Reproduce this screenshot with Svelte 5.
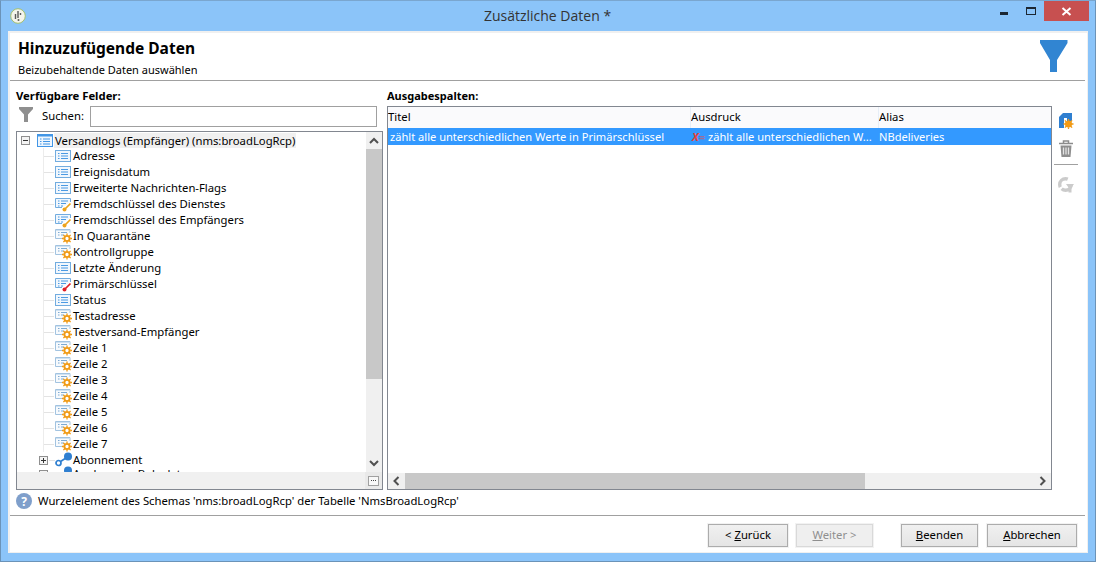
<script>
  const fields = [
    ['Adresse', 'list'], ['Ereignisdatum', 'list'], ['Erweiterte Nachrichten-Flags', 'list'],
    ['Fremdschlüssel des Dienstes', 'key'], ['Fremdschlüssel des Empfängers', 'key'],
    ['In Quarantäne', 'gear'], ['Kontrollgruppe', 'gear'], ['Letzte Änderung', 'list'],
    ['Primärschlüssel', 'pkey'], ['Status', 'list'], ['Testadresse', 'gear'],
    ['Testversand-Empfänger', 'gear'], ['Zeile 1', 'gear'], ['Zeile 2', 'gear'], ['Zeile 3', 'gear'],
    ['Zeile 4', 'gear'], ['Zeile 5', 'gear'], ['Zeile 6', 'gear'], ['Zeile 7', 'gear']
  ];
</script>

{#snippet gearShape(cx, cy)}
  <circle cx={cx} cy={cy} r="2.600" fill="#fff" stroke="#f09a14" stroke-width="1.900" />
  <path d="M{cx} {cy - 5}v1.800M{cx} {cy + 3.200}v1.800M{cx - 5} {cy}h1.800M{cx + 3.200} {cy}h1.800M{cx - 3.600} {cy - 3.600}l1.300 1.300M{cx + 2.300} {cy + 2.300}l1.300 1.300M{cx - 3.600} {cy + 3.600}l1.300-1.300M{cx + 2.300} {cy - 2.300}l1.300-1.300" stroke="#f09a14" stroke-width="1.300" fill="none" />
{/snippet}

{#snippet fieldIcon(kind)}
  <svg class="ficon" width="18" height="16" viewBox="0 0 18 16">
    {#if kind === 'list'}
      <rect x=".5" y="2.500" width="15" height="11" fill="#f1f7fd" stroke="#72acdf" />
      <path d="M3 5.500h1.500M6 5.500h7M3 8h1.500M6 8h7M3 10.500h1.500M6 10.500h7" stroke="#4b9ae3" stroke-width="1.200" fill="none" />
    {:else if kind === 'gear'}
      <path d="M8 10.500H.5V1.500h14.500V5" fill="#f7fafd" stroke="#a2c3e0" />
      <rect x="1" y="2" width="13.500" height="1" fill="#cfe2f3" />
      <path d="M3 4.500h1.500M6 4.500h6M3 7h1.500M6 7h3" stroke="#7eabd3" fill="none" />
      {@render gearShape(12, 10.500)}
    {:else}
      {@const tint = kind === 'key' ? '#eda31c' : '#df1f26'}
      <path d="M7 11.500H.5V2.500h15V6" fill="#f1f7fd" stroke="#72acdf" />
      <path d="M3 5h1.500M6 5h7M3 7.500h1.500M6 7.500h5M3 10h1.500M6 10h2" stroke="#4b9ae3" fill="none" />
      <path d="M15.500 7.500L10 13" stroke={tint} stroke-width="1.700" fill="none" />
      <circle cx="9.500" cy="13.500" r="2" fill={tint} />
    {/if}
  </svg>
{/snippet}

{#snippet linkIcon()}
  <svg class="ficon" width="18" height="16" viewBox="0 0 18 16">
    <circle cx="3.500" cy="11" r="2.500" fill="#fff" stroke="#2f7fd0" stroke-width="1.700" />
    <path d="M5.500 9.500L11 6" stroke="#2f7fd0" stroke-width="1.700" />
    <circle cx="13" cy="4.500" r="4" fill="#2f7fd0" />
  </svg>
{/snippet}

<div class="window">
  <header class="titlebar">
    <svg class="appicon" width="16" height="16" viewBox="0 0 16 16">
      <circle cx="8" cy="8" r="7.300" fill="#f4f4ec" stroke="#a4c06e" />
      <path d="M8 3v7M5.500 6v5M10.500 5v2" stroke="#5b5b5b" stroke-width="1.400" fill="none" />
      <circle cx="8.500" cy="12" r="1" fill="#5b5b5b" />
    </svg>
    <span class="wintitle">Zusätzliche Daten *</span>
    <div class="winbtns">
      <span class="wbtn"><i class="minimize"></i></span>
      <span class="wbtn"><i class="maximize"></i></span>
      <span class="wbtn close">
        <svg width="11" height="9" viewBox="0 0 11 9"><path d="M1.500 1l8 7M9.500 1l-8 7" stroke="#fff" stroke-width="2" /></svg>
      </span>
    </div>
  </header>

  <div class="client">
    <section class="heading">
      <div>
        <h1>Hinzuzufügende Daten</h1>
        <p>Beizubehaltende Daten auswählen</p>
      </div>
      <svg class="funnel" width="28" height="32" viewBox="0 0 28 32">
        <path d="M0 0H27.500V3L17 20V32H10V20L0 3Z" fill="#3185d2" />
      </svg>
    </section>

    <div class="panels">
      <section class="left">
        <h2>Verfügbare Felder:</h2>
        <div class="search">
          <svg width="14" height="15" viewBox="0 0 14 15"><path d="M0 0H14V2L9 7.500V15H5V7.500L0 2Z" fill="#8f8f8f" /></svg>
          <label for="search">Suchen:</label>
          <input id="search" type="text" />
        </div>
        <div class="treebox">
          <div class="treemain">
            <div class="treerows">
              <div class="row root">
                <span class="expander"></span>
                <svg class="rooticon" width="16" height="14" viewBox="0 0 16 14">
                  <rect x=".5" y=".5" width="15" height="12" fill="#eef6fe" stroke="#4296e6" />
                  <rect x="1" y="1" width="14" height="1.500" fill="#4296e6" />
                  <path d="M3 5h1.500M6 5h7M3 7.500h1.500M6 7.500h7M3 10h1.500M6 10h7" stroke="#4296e6" stroke-width="1.200" />
                </svg>
                <span class="roottext">Versandlogs (Empfänger) (nms:broadLogRcp)</span>
              </div>
              {#each fields as [name, kind]}
                <div class="row child">
                  <i class="branch"></i>
                  {@render fieldIcon(kind)}
                  <span>{name}</span>
                </div>
              {/each}
              <div class="row link">
                <span class="expander plus"></span>
                <i class="branch short"></i>
                {@render linkIcon()}
                <span>Abonnement</span>
              </div>
              <div class="row link last">
                <span class="expander plus"></span>
                <i class="branch short"></i>
                {@render linkIcon()}
                <span>Analyse der Bohrdaten</span>
              </div>
            </div>
            <div class="vscroll">
              <svg width="16" height="17" viewBox="0 0 16 17"><path d="M4 11l4-4 4 4" stroke="#505050" stroke-width="2" fill="none" /></svg>
              <div class="vthumb"></div>
              <div class="vrest"></div>
              <svg width="16" height="17" viewBox="0 0 16 17"><path d="M4 6l4 4 4-4" stroke="#505050" stroke-width="2" fill="none" /></svg>
            </div>
          </div>
          <div class="treefoot">
            <div class="corner"><span class="more"><i></i><i></i><i></i></span></div>
          </div>
        </div>
      </section>

      <section class="right">
        <h2 class="narrow">Ausgabespalten:</h2>
        <div class="rightbody">
          <div class="tablebox">
            <div class="thead">
              <span class="c1">Titel</span>
              <span class="c2">Ausdruck</span>
              <span class="c3">Alias</span>
            </div>
            <div class="trow">
              <span class="c1">zählt alle unterschiedlichen Werte in Primärschlüssel</span>
              <span class="c2"><b class="xeq">X<em>=</em></b> zählt alle unterschiedlichen W...</span>
              <span class="c3">NBdeliveries</span>
            </div>
            <div class="tfill"></div>
            <div class="hscroll">
              <svg width="17" height="16" viewBox="0 0 17 16"><path d="M10.500 4l-4 4 4 4" stroke="#505050" stroke-width="2" fill="none" /></svg>
              <div class="hthumb"></div>
              <div class="hrest"></div>
              <svg width="17" height="16" viewBox="0 0 17 16"><path d="M6.500 4l4 4-4 4" stroke="#505050" stroke-width="2" fill="none" /></svg>
            </div>
          </div>
          <aside class="tools">
            <svg class="t-add" width="16" height="17" viewBox="0 0 16 17">
              <path d="M1 5L5 1H14V9H9V6H6V16H1Z" fill="#2f7fd0" />
              {@render gearShape(10.500, 12)}
              <circle cx="10.500" cy="12" r="2.600" fill="#f59a12" />
            </svg>
            <svg class="t-trash" width="16" height="17" viewBox="0 0 16 17">
              <path d="M1 3.500h14M5.500 3V1h5v2" stroke="#8c8c8c" stroke-width="1.500" fill="none" />
              <path d="M2.500 5.500h11L12.500 17h-9z" fill="#8e8e8e" />
              <path d="M5.500 7.500v7M8 7.500v7M10.500 7.500v7" stroke="#e4e4e4" stroke-width="1.300" />
            </svg>
            <hr />
            <svg width="16" height="17" viewBox="0 0 16 17">
              <circle cx="7.500" cy="8.500" r="5.800" fill="none" stroke="#cbcbcb" stroke-width="3.400" stroke-dasharray="13 2 14 7" />
              <path d="M8 8H16L13.500 11.500V16.500H10.500V11.500Z" fill="#cbcbcb" />
            </svg>
          </aside>
        </div>
      </section>
    </div>

    <div class="status">
      <svg width="16" height="16" viewBox="0 0 16 16">
        <circle cx="8" cy="8" r="8" fill="#7f9fcb" />
        <text x="8" y="12.500" text-anchor="middle" class="qmark">?</text>
      </svg>
      <span>Wurzelelement des Schemas 'nms:broadLogRcp' der Tabelle 'NmsBroadLogRcp'</span>
    </div>

    <footer class="buttons">
      <button class="b-back">&lt; <u>Z</u>urück</button>
      <button class="b-next" disabled><u>W</u>eiter &gt;</button>
      <button class="b-end"><u>B</u>eenden</button>
      <button class="b-cancel"><u>A</u>bbrechen</button>
    </footer>
  </div>
</div>

<style>
  :global(body) {
    margin: 0;
    background: #fff;
  }
  .window {
    width: 1096px;
    height: 562px;
    box-sizing: border-box;
    display: flex;
    flex-direction: column;
    background: #8bc4f9;
    border: 1px solid #6b93b8;
    border-top-color: #7aa6cf;
    color: #000;
    font-family: "Noto Sans", sans-serif;
    font-size: 11.300px;
  }
  .titlebar {
    height: 30px;
    flex: none;
    position: relative;
    display: flex;
    align-items: center;
    justify-content: center;
  }
  .appicon {
    position: absolute;
    left: 9px;
    top: 7px;
  }
  .wintitle {
    font-family: "Open Sans", sans-serif;
    font-size: 14px;
    color: #333;
    margin: -2px 0 0 -1px;
  }
  .winbtns {
    position: absolute;
    right: 6px;
    top: 0;
    display: flex;
    align-items: flex-start;
  }
  .wbtn {
    width: 27px;
    height: 20px;
    display: flex;
    align-items: center;
    justify-content: center;
  }
  .wbtn.close {
    width: 45px;
    background: #c75050;
  }
  .minimize {
    width: 8px;
    height: 3px;
    background: #1c2733;
    margin-top: 5px;
  }
  .maximize {
    width: 8px;
    height: 5px;
    border: 1px solid #1c2733;
    border-top-width: 2px;
  }
  .client {
    flex: 1;
    margin: 0 7px 8px;
    background: #fff;
    border: 2px solid #f0f0f0;
    border-right-width: 1px;
    border-bottom-width: 1px;
    display: flex;
    flex-direction: column;
    min-height: 0;
  }
  .heading {
    height: 48px;
    flex: none;
    margin-right: 2px;
    box-sizing: border-box;
    padding: 5px 0 0 8px;
    border-bottom: 1px solid #a0a0a0;
    display: flex;
    justify-content: space-between;
    align-items: flex-start;
  }
  h1 {
    margin: 0;
    font-size: 15.500px;
    line-height: 20px;
    font-weight: 700;
  }
  .heading p {
    margin: 4px 0 0;
    line-height: 15px;
    font-size: 11px;
  }
  .funnel {
    margin: 2px 17px 0 0;
  }
  .panels {
    height: 409px;
    flex: none;
    display: flex;
    gap: 4px;
    padding: 7px 0 0 6px;
    box-sizing: border-box;
  }
  h2 {
    margin: 0;
    font-size: 11.300px;
    font-weight: 700;
    line-height: 16px;
  }
  h2.narrow {
    font-size: 11px;
  }
  .left {
    width: 367px;
    display: flex;
    flex-direction: column;
  }
  .search {
    height: 22px;
    margin-top: 2px;
    display: flex;
    align-items: center;
    padding-left: 3px;
  }
  .search svg {
    margin-top: -6px;
  }
  .search label {
    margin: -3px 0 0 9px;
    width: 48px;
  }
  .search input {
    width: 287px;
    height: 21px;
    margin: 0 0 1px;
    box-sizing: border-box;
    border: 1px solid #a0a0a0;
    padding: 0;
    background: #fff;
  }
  .treebox {
    margin-top: 3px;
    height: 359px;
    box-sizing: border-box;
    border: 1px solid #828790;
    display: flex;
    flex-direction: column;
  }
  .treemain {
    flex: 1;
    display: flex;
    min-height: 0;
  }
  .treerows {
    flex: 1;
    overflow: hidden;
  }
  .row {
    height: 16px;
    display: flex;
    align-items: center;
    line-height: 16px;
    white-space: nowrap;
    position: relative;
  }
  .root {
    padding-left: 4px;
  }
  .roottext {
    background: #f0f0f0;
    padding: 0 1px;
    margin-left: 1px;
    height: 15px;
    line-height: 15px;
  }
  .rooticon {
    margin-left: 7px;
    margin-top: 1px;
  }
  .expander {
    width: 9px;
    height: 9px;
    box-sizing: border-box;
    border: 1px solid #8f8f8f;
    background: #f4f4f4;
    flex: none;
    position: relative;
    margin-top: 1px;
  }
  .expander::before {
    content: "";
    position: absolute;
    left: 1px;
    top: 3px;
    width: 5px;
    height: 1px;
    background: #333;
  }
  .expander.plus::after {
    content: "";
    position: absolute;
    left: 3px;
    top: 1px;
    width: 1px;
    height: 5px;
    background: #333;
  }
  .child {
    padding-left: 28px;
  }
  .child::before {
    content: "";
    position: absolute;
    left: 26px;
    top: 0;
    width: 1px;
    height: 16px;
    background: #ececec;
  }
  .branch {
    position: absolute;
    left: 27px;
    top: 8px;
    width: 10px;
    height: 1px;
    background: #e3e3e3;
  }
  .ficon {
    margin-left: 10px;
    flex: none;
  }
  .link {
    padding-left: 22px;
  }
  .last {
    margin-top: -2px;
  }
  .branch.short {
    left: 32px;
    width: 6px;
  }
  .link .ficon {
    margin-left: 7px;
  }
  .vscroll {
    width: 16px;
    flex: none;
    background: #f0f0f0;
    display: flex;
    flex-direction: column;
  }
  .vthumb {
    height: 230px;
    background: #c8c8c8;
  }
  .vrest {
    flex: 1;
  }
  .treefoot {
    height: 17px;
    flex: none;
    background: #f0f0f0;
    display: flex;
    justify-content: flex-end;
  }
  .corner {
    width: 17px;
    background: #e9e9e9;
    display: flex;
    align-items: center;
    justify-content: center;
  }
  .more {
    width: 11px;
    height: 10px;
    box-sizing: border-box;
    border: 1px solid #a0a0a0;
    background: #f8f8f8;
    display: flex;
    align-items: center;
    justify-content: center;
    gap: 1px;
  }
  .more i {
    width: 1px;
    height: 1px;
    background: #444;
  }
  .right {
    flex: 1;
    min-width: 0;
    display: flex;
    flex-direction: column;
  }
  .rightbody {
    margin-top: 2px;
    display: flex;
  }
  .tablebox {
    width: 665px;
    height: 384px;
    box-sizing: border-box;
    border: 1px solid #828790;
    display: flex;
    flex-direction: column;
  }
  .thead {
    height: 21px;
    flex: none;
    display: flex;
    background: #fafafc;
    line-height: 20px;
  }
  .trow {
    height: 17px;
    flex: none;
    display: flex;
    background: #3399ff;
    color: #fff;
    line-height: 17px;
    white-space: nowrap;
    font-size: 11.100px;
  }
  .c1, .c2, .c3 {
    box-sizing: border-box;
    overflow: hidden;
  }
  .thead .c1, .thead .c2 {
    border-right: 1px solid #e6eef7;
  }
  .trow .c1 {
    padding-left: 2px;
  }
  .c1 { width: 303px; }
  .c2 { width: 188px; }
  .c3 { flex: 1; }
  .xeq {
    color: #e2443e;
    font-weight: 700;
    font-style: italic;
    margin-left: 1px;
  }
  .xeq em {
    font-style: normal;
    color: #9a6f9a;
  }
  .tfill {
    flex: 1;
  }
  .hscroll {
    height: 16px;
    flex: none;
    background: #f0f0f0;
    display: flex;
  }
  .hthumb {
    width: 460px;
    background: #c8c8c8;
  }
  .hrest {
    flex: 1;
  }
  .tools {
    width: 28px;
    display: flex;
    flex-direction: column;
    align-items: center;
    padding-top: 6px;
    box-sizing: border-box;
  }
  .t-trash {
    margin-top: 11px;
  }
  .tools hr {
    width: 24px;
    height: 1px;
    border: 0;
    background: #a0a0a0;
    margin: 7px 0 11px;
  }
  .status {
    height: 26px;
    flex: none;
    margin-right: 2px;
    box-sizing: border-box;
    display: flex;
    align-items: center;
    gap: 6px;
    padding: 0 0 4px 6px;
    border-bottom: 1px solid #a0a0a0;
  }
  .qmark {
    fill: #fff;
    font-size: 12px;
    font-weight: 700;
    font-family: "Noto Sans", sans-serif;
  }
  .buttons {
    flex: 1;
    display: flex;
    align-items: flex-start;
    padding: 8px 0 0 698px;
  }
  button {
    height: 23px;
    box-sizing: border-box;
    border: 1px solid #acacac;
    background: linear-gradient(#f0f0f0, #e5e5e5);
    font: inherit;
    color: #000;
    padding: 0 0 2px;
    outline: 1px solid #f2f2f2;
  }
  button:disabled {
    color: #8f8f8f;
    background: #efefef;
    border-color: #d9d9d9;
  }
  .b-back { width: 80px; }
  .b-next { width: 77px; margin-left: 8px; }
  .b-end { width: 77px; margin-left: 28px; }
  .b-cancel { width: 90px; margin-left: 9px; }
</style>
